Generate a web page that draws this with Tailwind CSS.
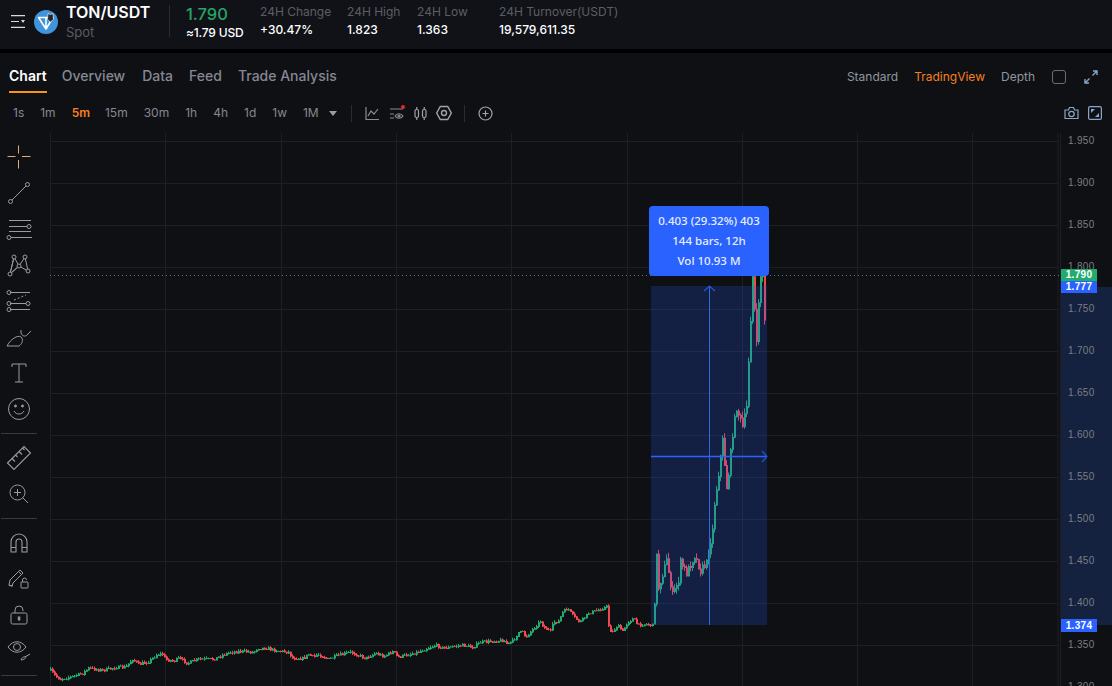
<!DOCTYPE html>
<html lang="en">
<head>
    <meta charset="UTF-8">
    <meta name="viewport" content="width=device-width, initial-scale=1.0">
    <title>TON/USDT Chart</title>
    <script src="https://cdn.jsdelivr.net/npm/@tailwindcss/browser@4"></script>
</head>
<body class="bg-black w-[1112px] h-[686px] overflow-hidden font-['Inter',sans-serif]">
    <!-- ticker bar -->
    <header class="h-[49px] bg-[#111217] flex items-center relative">
        <svg class="ml-[11px] w-[14px] h-[13px] -mt-[6px]" viewBox="0 0 14 13" fill="none" stroke="#d8d9dc" stroke-width="1.2">
            <path d="M0 .7h14M0 6.5h8M0 12.3h14"/>
            <path d="M10 5h4l-2 3z" fill="#d8d9dc" stroke="none"/>
        </svg>
        <svg class="ml-[9px] w-[24px] h-[24px] -mt-[5px]" viewBox="0 0 24 24">
            <circle cx="12" cy="12" r="12" fill="#3f94dc"/>
            <path d="M4.500 7.500h14.500l-7 11.500z M12 7.500v11.500" fill="none" stroke="#fff" stroke-width="1.6" stroke-linejoin="round"/>
            <path d="M13.500 9.500 14 3.500l2.500 1 2.500-1 .5 6-3 2.500z" fill="#22252c" stroke="#fff" stroke-width=".6"/>
        </svg>
        <div class="ml-[8px] -mt-[8px] w-[103px]">
            <div class="text-[16px] leading-[20px] font-semibold text-white">TON/USDT</div>
            <div class="text-[13px] leading-[16px] mt-[2px] text-[#5a5c63]">Spot</div>
        </div>
        <div class="w-px h-[32px] bg-[#2b2c31] -mt-[7px]"></div>
        <div class="ml-[16px] w-[74px] -mt-[4px]">
            <div class="text-[16.5px] leading-[20px] font-medium text-[#25a567]">1.790</div>
            <div class="text-[12px] leading-[16px] mt-[1px] font-medium tracking-[-0.2px] text-white">≈1.79 USD</div>
        </div>
        <div class="w-[87px] -mt-[7px]">
            <div class="text-[12px] leading-[16px] text-[#5c5e66]">24H Change</div>
            <div class="text-[12px] leading-[16px] mt-[2px] font-medium text-white">+30.47%</div>
        </div>
        <div class="w-[70px] -mt-[7px]">
            <div class="text-[12px] leading-[16px] text-[#5c5e66]">24H High</div>
            <div class="text-[12px] leading-[16px] mt-[2px] font-medium text-white">1.823</div>
        </div>
        <div class="w-[82px] -mt-[7px]">
            <div class="text-[12px] leading-[16px] text-[#5c5e66]">24H Low</div>
            <div class="text-[12px] leading-[16px] mt-[2px] font-medium text-white">1.363</div>
        </div>
        <div class="-mt-[7px]">
            <div class="text-[12px] leading-[16px] text-[#5c5e66]">24H Turnover(USDT)</div>
            <div class="text-[12px] leading-[16px] mt-[2px] font-medium text-white">19,579,611.35</div>
        </div>
    </header>

    <main class="mt-[4px] h-[633px] bg-[#0f1014] flex flex-col">
        <!-- tabs -->
        <div class="h-[40px] pt-[1px] flex items-end justify-between">
            <div class="flex ml-[9px] text-[14px] font-medium text-[#858892]">
                <div class="pb-[5px] border-b-2 border-[#f7931a] text-white font-semibold">Chart</div>
                <div class="ml-[15px] pb-[7px]">Overview</div>
                <div class="ml-[17px] pb-[7px]">Data</div>
                <div class="ml-[16px] pb-[7px]">Feed</div>
                <div class="ml-[16px] pb-[7px]">Trade Analysis</div>
            </div>
            <div class="flex items-center mr-[14px] pb-[7px] text-[12px] text-[#9095a0]">
                <span>Standard</span>
                <span class="ml-[16px] text-[#f77f1e]">TradingView</span>
                <span class="ml-[16px]">Depth</span>
                <div class="ml-[17px] w-[14px] h-[14px] rounded-[3px] border-[1.5px] border-[#6b6d74]"></div>
                <svg class="ml-[18px] w-[14px] h-[14px]" viewBox="0 0 14 14" fill="none" stroke="#8ba5c9" stroke-width="1.400">
                    <path d="M8.500 5.500 13 1M9 1h4v4M5.500 8.500 1 13M5 13H1V9"/>
                </svg>
            </div>
        </div>

        <!-- intervals and chart tools -->
        <div class="h-[40px] flex items-center text-[12px] text-[#858892]">
            <span class="ml-[13px]">1s</span>
            <span class="ml-[16px]">1m</span>
            <span class="ml-[16px] text-[#f77f1e] font-semibold">5m</span>
            <span class="ml-[15px]">15m</span>
            <span class="ml-[16px]">30m</span>
            <span class="ml-[16px]">1h</span>
            <span class="ml-[16px]">4h</span>
            <span class="ml-[16px]">1d</span>
            <span class="ml-[16px]">1w</span>
            <span class="ml-[16px]">1M</span>
            <svg class="ml-[10px] w-[8px] h-[5px]" viewBox="0 0 8 5"><path d="M0 0h8L4 5z" fill="#9a9ca3"/></svg>
            <div class="ml-[14px] w-px h-[17px] bg-[#2b2c31]"></div>
            <svg class="ml-[13px] w-[15px] h-[15px]" viewBox="0 0 15 15" fill="none" stroke="#8a8c92" stroke-width="1.200"><path d="M1 1v12.500h13M3 10l3-5 3 3 4-5"/></svg>
            <div class="relative ml-[10px] w-[14px] h-[15px]">
                <svg class="w-[14px] h-[15px]" viewBox="0 0 14 15" fill="none" stroke="#8a8c92" stroke-width="1.200"><path d="M0 3h13M0 8h4M0 12h4"/><path d="M5 10c2-3 6-3 8 0-2 3-6 3-8 0z"/><circle cx="9" cy="10" r="1" fill="#8a8c92"/></svg>
                <div class="absolute -top-[1px] -right-[1px] w-[4px] h-[4px] rounded-full bg-[#f0202c]"></div>
            </div>
            <svg class="ml-[10px] w-[13px] h-[15px]" viewBox="0 0 13 15" fill="none" stroke="#a0a2a8" stroke-width="1.200"><rect x="1" y="3.500" width="3.500" height="8" rx="1.500"/><rect x="8.500" y="3.500" width="3.500" height="8" rx="1.500"/><path d="M2.800 1v2.500M2.800 11.500V14M10.200 1v2.500M10.200 11.500V14"/></svg>
            <svg class="ml-[9px] w-[16px] h-[16px]" viewBox="0 0 16 16" fill="none" stroke="#a0a2a8" stroke-width="1.400"><path d="M4.300 1.500h7.400L15.300 8l-3.600 6.500H4.300L.7 8z"/><circle cx="8" cy="8" r="2.500"/></svg>
            <div class="ml-[12px] w-px h-[17px] bg-[#2b2c31]"></div>
            <svg class="ml-[13px] w-[15px] h-[15px]" viewBox="0 0 15 15" fill="none" stroke="#a0a2a8" stroke-width="1.200"><circle cx="7.500" cy="7.500" r="6.500"/><path d="M7.500 4.500v6M4.500 7.500h6"/></svg>
            <div class="ml-auto mr-[10px] flex items-center">
                <svg class="w-[15px] h-[14px]" viewBox="0 0 15 14" fill="none" stroke="#8ba5c9" stroke-width="1.200"><path d="M1 4h3.500l1-2.500h4l1 2.500H14v8.500H1z"/><circle cx="7.500" cy="8" r="2.700"/></svg>
                <svg class="ml-[9px] w-[14px] h-[14px]" viewBox="0 0 14 14"><rect x=".6" y=".6" width="12.800" height="12.800" rx="1.500" fill="#0f1014" stroke="#8ba5c9" stroke-width="1.200"/><path d="M3 3h4L3 7zM11 11H7l4-4z" fill="#8ba5c9"/></svg>
            </div>
        </div>

        <div class="flex-1 flex min-h-0">
            <!-- drawing tools -->
            <aside class="w-[50px] shrink-0 pt-[6px] flex flex-col">
                <div class="w-[38px] h-[36px] flex items-center justify-center">
                    <svg class="w-[24px] h-[24px]" viewBox="0 0 24 24" fill="none" stroke="#e8a96e" stroke-width="1"><path d="M.5 11.500h8M15 11.500h8.500M11.500 .5v8M11.500 15v8.500"/></svg>
                </div>
                <div class="w-[38px] h-[36px] flex items-center justify-center">
                    <svg class="w-[24px] h-[24px]" viewBox="0 0 24 24" fill="none" stroke="#9a9ba0" stroke-width="1"><circle cx="3.500" cy="20.500" r="2"/><circle cx="20.500" cy="3.500" r="2"/><path d="M5 19 19 5"/></svg>
                </div>
                <div class="w-[38px] h-[36px] flex items-center justify-center">
                    <svg class="w-[26px] h-[24px]" viewBox="0 0 26 24" fill="none" stroke="#9a9ba0" stroke-width="1"><path d="M3 3.500h22M3 9.500h20M3 14.500h22M4 20.500h22"/><circle cx="23" cy="9.500" r="2" fill="#0f1014"/><circle cx="3" cy="20.500" r="2" fill="#0f1014"/></svg>
                </div>
                <div class="w-[38px] h-[36px] flex items-center justify-center">
                    <svg class="w-[24px] h-[24px]" viewBox="0 0 24 24" fill="none" stroke="#9a9ba0" stroke-width="1"><path d="M7 4 12 13 18 4 21 18 12 13 3 21z M7 4 3 21M12 13l-9 8"/><circle cx="7" cy="4" r="2" fill="#0f1014"/><circle cx="18" cy="4" r="2" fill="#0f1014"/><circle cx="12" cy="13" r="2" fill="#0f1014"/><circle cx="3" cy="21" r="2" fill="#0f1014"/><circle cx="21" cy="18" r="2" fill="#0f1014"/></svg>
                </div>
                <div class="w-[38px] h-[36px] flex items-center justify-center">
                    <svg class="w-[26px] h-[24px]" viewBox="0 0 26 24" fill="none" stroke="#9a9ba0" stroke-width="1"><path d="M4 3.500h20M4 14.500h16M4 20.500h20"/><path d="M8 11l12-5" stroke-dasharray="2 2"/><circle cx="3" cy="3.500" r="2"/><circle cx="3" cy="14.500" r="2"/><circle cx="22" cy="14.500" r="2"/><circle cx="3" cy="20.500" r="2"/></svg>
                </div>
                <div class="w-[38px] h-[36px] flex items-center justify-center">
                    <svg class="w-[26px] h-[24px]" viewBox="0 0 26 24" fill="none" stroke="#9a9ba0" stroke-width="1"><path d="M1 21h12c3-2 4-5 3-8-1-2-4-2-6-1-4 2-7 5-9 9z"/><path d="M15 5v3c1 3 4 4 6 2l4-4"/></svg>
                </div>
                <div class="w-[38px] h-[36px] flex items-center justify-center">
                    <svg class="w-[16px] h-[20px]" viewBox="0 0 16 20" fill="none" stroke="#9a9ba0" stroke-width="1"><path d="M1 4V1h14v3M8 1v18M4 19h8"/></svg>
                </div>
                <div class="w-[38px] h-[36px] flex items-center justify-center">
                    <svg class="w-[24px] h-[24px]" viewBox="0 0 24 24" fill="none" stroke="#9a9ba0" stroke-width="1"><circle cx="12" cy="12" r="10.500"/><path d="M7 14c2 4 8 4 10 0"/><circle cx="8.500" cy="9" r="1" fill="#9a9ba0"/><circle cx="15.500" cy="9" r="1" fill="#9a9ba0"/></svg>
                </div>
                <div class="ml-[1px] mt-[6px] mb-[6px] w-[36px] h-px bg-[#3a3b40]"></div>
                <div class="w-[38px] h-[36px] flex items-center justify-center">
                    <svg class="w-[26px] h-[26px]" viewBox="0 0 26 26" fill="none" stroke="#9a9ba0" stroke-width="1.100"><path d="M1.500 18 18 1.500 24.500 8 8 24.500z"/><path d="M6 13.500l3 3M9.500 10l2 2M13 6.500l3 3M16.500 3l2 2"/></svg>
                </div>
                <div class="w-[38px] h-[36px] flex items-center justify-center">
                    <svg class="w-[20px] h-[20px]" viewBox="0 0 20 20" fill="none" stroke="#9a9ba0" stroke-width="1"><circle cx="8.500" cy="8.500" r="7.500"/><path d="M14 14l5 5M8.500 5v7M5 8.500h7"/></svg>
                </div>
                <div class="ml-[1px] mt-[6px] mb-[6px] w-[36px] h-px bg-[#3a3b40]"></div>
                <div class="w-[38px] h-[36px] flex items-center justify-center">
                    <svg class="w-[18px] h-[20px]" viewBox="0 0 18 20" fill="none" stroke="#9a9ba0" stroke-width="1.100"><path d="M1 19V9a8 8 0 0 1 16 0v10h-5V9a3 3 0 0 0-6 0v10z"/><path d="M1 14.500h5M12 14.500h5"/></svg>
                </div>
                <div class="w-[38px] h-[36px] flex items-center justify-center">
                    <svg class="w-[22px] h-[22px]" viewBox="0 0 22 22" fill="none" stroke="#9a9ba0" stroke-width="1"><path d="M1 17 2 12 12 2l3 3-1 1L5 15l-1 3zM10.500 3.500l3 3"/><path d="M.8 17.500l4 .5"/><rect x="13" y="14" width="7" height="6" rx=".5"/><path d="M14.500 14v-2a2 2 0 0 1 4 0"/></svg>
                </div>
                <div class="w-[38px] h-[36px] flex items-center justify-center">
                    <svg class="w-[18px] h-[20px]" viewBox="0 0 18 20" fill="none" stroke="#9a9ba0" stroke-width="1"><rect x="1" y="8" width="16" height="11" rx="1.500"/><path d="M5 8V5a4 4 0 0 1 8 0v1"/><rect x="8.300" y="12" width="1.500" height="3" fill="#9a9ba0"/></svg>
                </div>
                <div class="w-[38px] h-[36px] flex items-center justify-center">
                    <svg class="w-[24px] h-[24px] -mt-[3px]" viewBox="0 0 24 24" fill="none" stroke="#9a9ba0" stroke-width="1"><path d="M1 9c5-7 13-7 18 0-5 7-13 7-18 0z"/><circle cx="10" cy="9" r="3.500"/><path d="M14 22c1-3 4-4 5-3-1 2-3 3-5 3zM18 19l5-3"/></svg>
                </div>
                <div class="ml-[1px] mt-[6px] w-[36px] h-px bg-[#3a3b40]"></div>
            </aside>

            <!-- price chart -->
            <section class="relative flex-1">
                <svg class="absolute inset-0 w-[1062px] h-[553px]" viewBox="50 133 1062 553">
                    <path id="grid" fill="none" stroke="#1e1f24"/>
                    <path id="up-wick" fill="none" stroke="#22ab6f"/>
                    <path id="down-wick" fill="none" stroke="#f0484f"/>
                    <path id="up" fill="none" stroke="#22ab6f" stroke-width="2"/>
                    <path id="down" fill="none" stroke="#f0484f" stroke-width="2"/>
                    <path d="M50 275.500H1060" stroke="#55b48f" stroke-dasharray="1 3" opacity=".7"/>
                    <rect x="1061" y="287" width="51" height="338" fill="#14213f"/>
                    <rect x="651" y="286" width="116" height="339" fill="#2962ff" opacity=".2"/>
                    <path d="M709.500 287V625" stroke="#3566d8"/>
                    <path d="M651 456.500H766" stroke="#2962ff" stroke-width="1.500"/>
                    <path d="M704 291l5.500-5 5.500 5M762 451l5 5.500-5 5.500" fill="none" stroke="#2962ff" stroke-width="1.200" opacity=".8"/>
                    <g id="axis" fill="#7c7e85" class="font-['Liberation_Sans',sans-serif] text-[10px] tracking-[0.3px]"></g>
                </svg>
                <div class="absolute left-[599px] top-[73px] w-[120px] h-[70px] rounded-[4px] bg-[#2962ff] flex flex-col items-center justify-center font-['Noto_Sans',sans-serif] font-medium text-[11.5px] leading-[20px] text-[#e8edfb]">
                    <div>0.403 (29.32%) 403</div>
                    <div>144 bars, 12h</div>
                    <div>Vol 10.93 M</div>
                </div>
                <div class="absolute left-[1011px] top-[136px] w-[36px] h-[12px] bg-[#22ab6f] text-white text-[10px] leading-[12px] font-semibold tracking-[0.3px] text-center font-['Liberation_Sans',sans-serif]">1.790</div>
                <div class="absolute left-[1011px] top-[148px] w-[36px] h-[12px] bg-[#2962ff] text-white text-[10px] leading-[12px] font-semibold tracking-[0.3px] text-center font-['Liberation_Sans',sans-serif]">1.777</div>
                <div class="absolute left-[1011px] top-[486px] w-[36px] h-[13px] bg-[#2962ff] text-white text-[10px] leading-[13px] font-semibold tracking-[0.3px] text-center font-['Liberation_Sans',sans-serif]">1.374</div>
            </section>
        </div>
    </main>

    <script>
        // x, y of the price path in page pixels
        const path = [[50,670],[55,676],[60,679],[73,676],[82,673],[88,668],[102,670],[117,667],[125,667],[132,659],[138,664],[147,662],[157,654],[162,654],[165,659],[173,661],[178,658],[187,663],[197,659],[213,659],[222,655],[230,652],[240,651],[253,652],[257,648],[267,648],[273,650],[288,652],[292,658],[303,658],[308,654],[313,657],[317,654],[328,659],[338,655],[350,652],[365,658],[375,653],[383,656],[393,651],[397,657],[417,652],[427,648],[435,645],[443,648],[462,645],[472,647],[480,642],[493,641],[503,640],[507,644],[513,640],[518,632],[522,632],[525,637],[533,628],[540,621],[543,627],[550,631],[553,622],[558,621],[562,612],[567,608],[572,615],[579,622],[588,613],[597,610],[607,606],[608,625],[611,633],[617,625],[622,631],[627,622],[633,618],[637,625],[645,624],[652,625],[654,600],[656,556],[658,587],[666,560],[672,595],[678,580],[680,562],[686,573],[694,555],[700,570],[706,563],[708,550],[712,530],[714,503],[718,473],[722,440],[726,487],[728,473],[732,433],[736,407],[742,427],[746,407],[748,360],[752,276],[754,310],[756,345],[758,300],[760,276],[762,276],[764,318],[766,276]];

        let seed = 7;
        const rnd = () => (seed = (seed * 16807) % 2147483647) / 2147483647;

        function priceAt(x) {
            for (let i = 1; i < path.length; i++) {
                if (x <= path[i][0]) {
                    const [x0, y0] = path[i - 1], [x1, y1] = path[i];
                    return y0 + (y1 - y0) * (x - x0) / (x1 - x0);
                }
            }
            return path[path.length - 1][1];
        }

        const paths = { up: '', down: '', upWick: '', downWick: '' };
        let prev = 670;
        for (let x = 50; x <= 765; x += 2) {
            const amp = x > 652 ? 4 : 1.3;
            const close = priceAt(x) + (rnd() - .5) * amp * 2;
            const hi = Math.min(prev, close) - rnd() * amp * 1.5;
            const lo = Math.max(prev, close) + rnd() * amp * 1.5;
            const top = Math.min(prev, close), bottom = Math.max(prev, close) + .8;
            const body = `M${x + 1} ${top.toFixed(1)}V${bottom.toFixed(1)}`;
            const wick = `M${x + .5} ${hi.toFixed(1)}V${lo.toFixed(1)}`;
            // y grows downwards, so a smaller close is a rise
            if (close <= prev) { paths.up += body; paths.upWick += wick; }
            else { paths.down += body; paths.downWick += wick; }
            prev = close;
        }
        document.getElementById('up').setAttribute('d', paths.up);
        document.getElementById('down').setAttribute('d', paths.down);
        document.getElementById('up-wick').setAttribute('d', paths.upWick);
        document.getElementById('down-wick').setAttribute('d', paths.downWick);

        let grid = 'M1060.5 133V686M1058 133V686';
        [50, 165, 281, 396, 511, 627, 742, 857, 972].forEach(x => grid += `M${x + .5} 133V686`);
        const labels = ['1.950', '1.900', '1.850', '1.800', '1.750', '1.700', '1.650', '1.600', '1.550', '1.500', '1.450', '1.400', '1.350', '1.300'];
        const axis = document.getElementById('axis');
        labels.forEach((t, i) => {
            const y = 141 + i * 42;
            grid += `M50 ${y + .5}H1058`;
            const el = document.createElementNS('http://www.w3.org/2000/svg', 'text');
            el.setAttribute('x', 1068);
            el.setAttribute('y', y + 3);
            el.textContent = t;
            axis.appendChild(el);
        });
        document.getElementById('grid').setAttribute('d', grid);
    </script>
</body>
</html>
